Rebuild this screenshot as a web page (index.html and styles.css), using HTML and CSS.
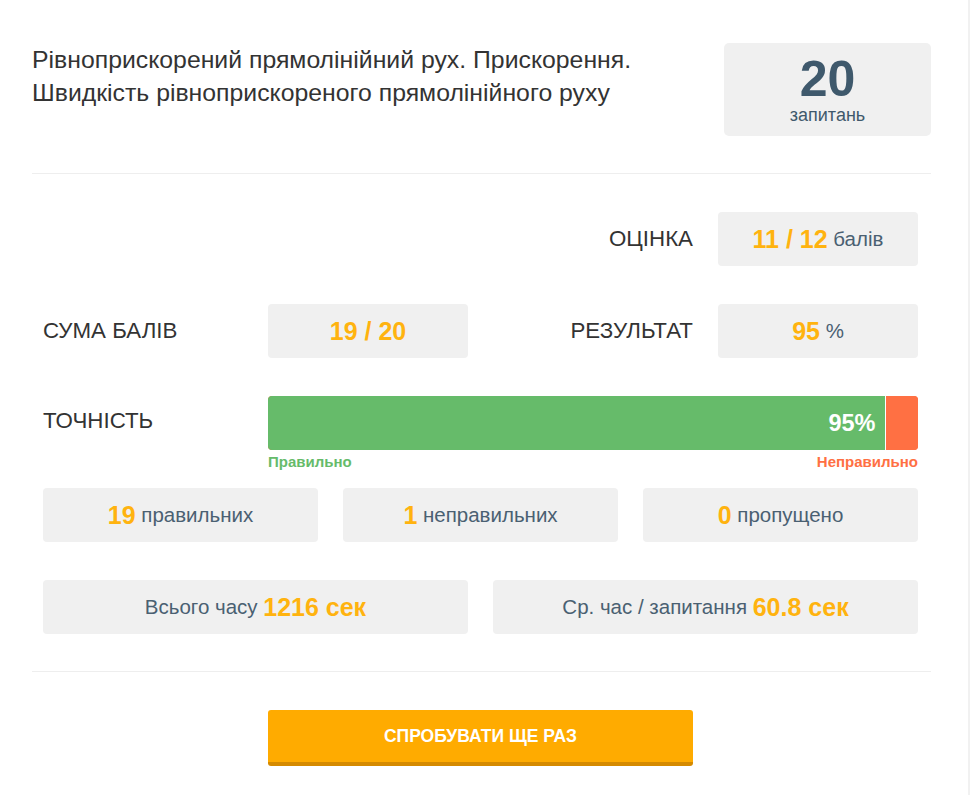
FILE: index.html
```html
<!DOCTYPE html>
<html lang="uk">
<head>
<meta charset="utf-8">
<title>Результат</title>
<link rel="stylesheet" href="styles.css">
</head>
<body>
<div class="page">
  <div class="container">
    <header class="head">
      <h1 class="title">Рівноприскорений прямолінійний рух. Прискорення. Швидкість рівноприскореного прямолінійного руху</h1>
      <div class="count">
        <div class="count-num">20</div>
        <div class="count-lbl">запитань</div>
      </div>
    </header>
    <hr class="sep">
    <section class="stats">
      <div class="grid4">
        <div class="lbl right col3">ОЦІНКА</div>
        <div class="box"><b class="hl">11 / 12</b>&nbsp;балів</div>
      </div>
      <div class="grid4">
        <div class="lbl">СУМА БАЛІВ</div>
        <div class="box"><b class="hl">19 / 20</b></div>
        <div class="lbl right">РЕЗУЛЬТАТ</div>
        <div class="box"><b class="hl">95</b>&nbsp;%</div>
      </div>
      <div class="grid4 acc">
        <div class="lbl acc-lbl">ТОЧНІСТЬ</div>
        <div class="bar-wrap">
          <div class="bar">
            <div class="bar-ok" style="width:95%"><span>95%</span></div>
            <div class="bar-bad"></div>
          </div>
          <div class="bar-legend">
            <span class="ok">Правильно</span>
            <span class="bad">Неправильно</span>
          </div>
        </div>
      </div>
      <div class="grid3">
        <div class="box"><b class="hl">19</b>&nbsp;правильних</div>
        <div class="box"><b class="hl">1</b>&nbsp;неправильних</div>
        <div class="box"><b class="hl">0</b>&nbsp;пропущено</div>
      </div>
      <div class="grid2">
        <div class="box">Всього часу&nbsp;<b class="hl">1216 сек</b></div>
        <div class="box">Ср. час / запитання&nbsp;<b class="hl">60.8 сек</b></div>
      </div>
    </section>
    <hr class="sep">
    <div class="actions">
      <button class="btn">СПРОБУВАТИ ЩЕ РАЗ</button>
    </div>
  </div>
</div>
</body>
</html>
```
FILE: styles.css
```css
* { box-sizing: border-box; }
html, body { margin: 0; padding: 0; background: #fff; }
body { font-family: "Liberation Sans", Arial, sans-serif; color: #333; }
.page {
  width: 970px;
  min-height: 795px;
  border-right: 2px solid #f1f1f1;
}
.container {
  width: 900px;
  margin-left: 32px;
  padding-top: 43px;
}
.head {
  display: flex;
  justify-content: space-between;
  align-items: flex-start;
}
.title {
  margin: 0;
  width: 660px;
  font-size: 24.8px;
  font-weight: normal;
  line-height: 33px;
  color: #333;
}
.count {
  width: 207px;
  height: 93px;
  background: #f0f0f0;
  border-radius: 5px;
  margin-right: 1px;
  text-align: center;
  color: #3f596c;
  padding-top: 10px;
}
.count-num { font-size: 50px; font-weight: bold; line-height: 52px; }
.count-lbl { font-size: 18px; line-height: 20px; }
.sep {
  border: 0;
  border-top: 1px solid #eeeeee;
  margin: 37px 0 0 0;
  width: 899px;
}
.stats {
  width: 875px;
  margin-left: 11px;
  padding-top: 38px;
}
.grid4 {
  display: grid;
  grid-template-columns: repeat(4, 200px);
  column-gap: 25px;
  align-items: center;
  margin-bottom: 38px;
}
.grid3 {
  display: grid;
  grid-template-columns: repeat(3, 275px);
  column-gap: 25px;
  margin-bottom: 38px;
}
.grid2 {
  display: grid;
  grid-template-columns: repeat(2, 425px);
  column-gap: 25px;
}
.col3 { grid-column: 3; }
.lbl {
  font-size: 22.3px;
  color: #333;
  line-height: 26px;
}
.right { text-align: right; }
.box {
  height: 54px;
  background: #f0f0f0;
  border-radius: 4px;
  display: flex;
  align-items: center;
  justify-content: center;
  font-size: 20.5px;
  color: #4a6072;
}
.hl {
  color: #ffb30f;
  font-size: 25px;
  font-weight: bold;
}
.acc { align-items: start; margin-bottom: 19px; }
.acc-lbl { padding-top: 12px; }
.bar-wrap { grid-column: 2 / span 3; }
.bar {
  display: flex;
  height: 54px;
  border-radius: 4px;
  overflow: hidden;
  background: #ff7043;
}
.bar-ok {
  background: #66bb6a;
  border-right: 1px solid #fff;
  display: flex;
  align-items: center;
  justify-content: flex-end;
  padding-right: 9px;
  color: #fff;
  font-size: 23.5px;
  font-weight: bold;
}
.bar-bad { flex: 1; background: #ff7043; }
.bar-legend {
  display: flex;
  justify-content: space-between;
  font-size: 15px;
  font-weight: bold;
  line-height: 14px;
  margin-top: 5px;
}
.ok { color: #66bb6a; }
.bad { color: #ff7043; }
.actions {
  padding-top: 38px;
  padding-left: 236px;
}
.btn {
  width: 425px;
  height: 56px;
  border: 0;
  border-bottom: 4px solid #d58a00;
  border-radius: 3px;
  background: #ffab00;
  color: #fff;
  font-family: "Liberation Sans", Arial, sans-serif;
  font-size: 17.5px;
  font-weight: bold;
  padding: 0;
}
```
